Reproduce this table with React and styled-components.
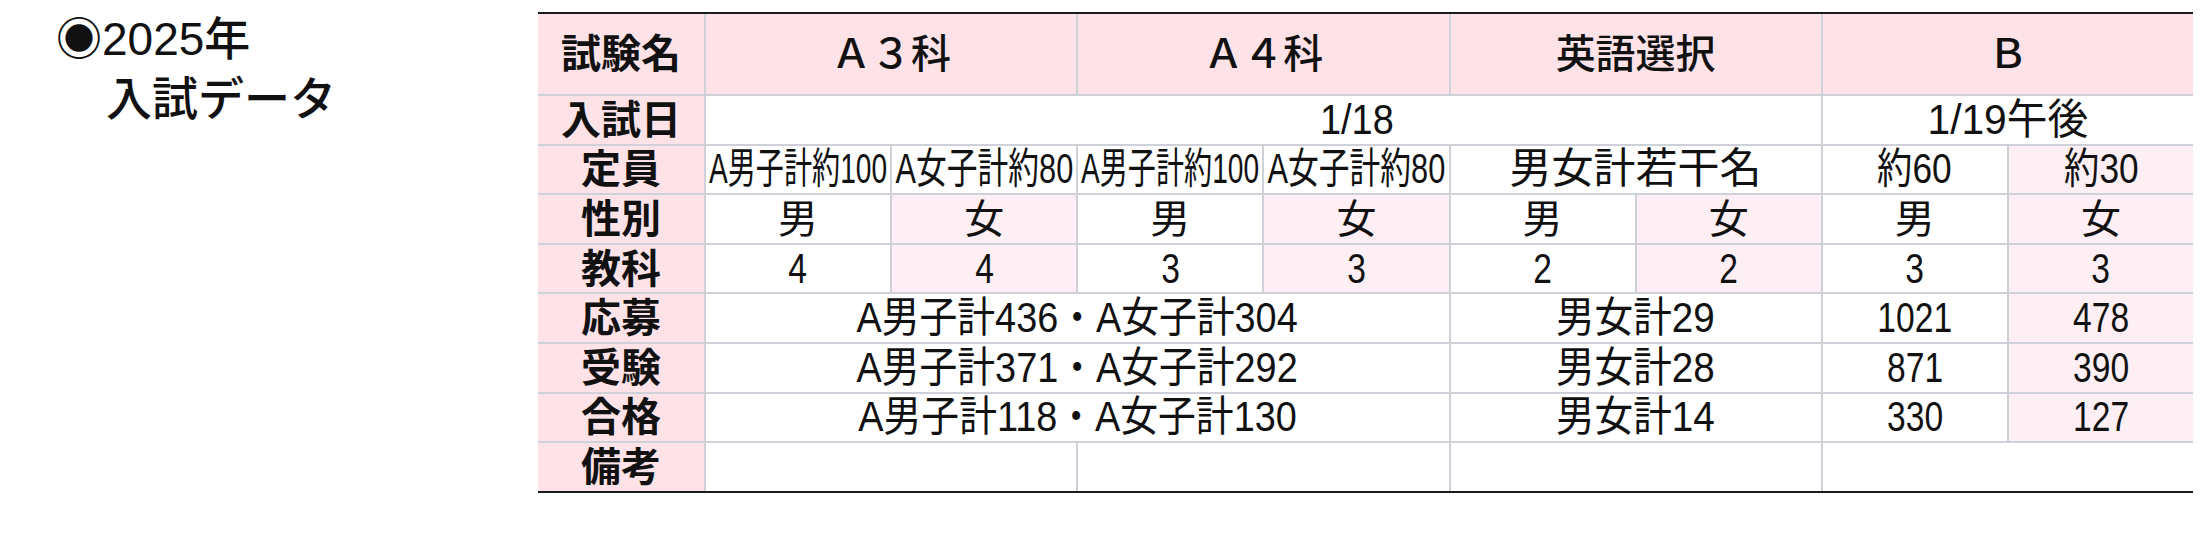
import React, { useLayoutEffect, useRef, useState } from "react"
import styled, { createGlobalStyle } from "styled-components"

const GlobalStyle = createGlobalStyle`
  body {
    margin: 0;
    background: #ffffff;
  }
`;

// shrinks a text horizontally when it is wider than its cell
function FitText({ children }) {
  const ref = useRef(null);
  const [fit, setFit] = useState({ scale: 1, pull: 0 });

  useLayoutEffect(() => {
    const el = ref.current;
    const avail = el.parentElement.clientWidth - 6;
    const w = el.offsetWidth;
    if (w > avail) setFit({ scale: avail / w, pull: (w - avail) / 2 });
  }, []);

  return (
    <Squeeze
      ref={ref}
      style={{ transform: `scaleX(${fit.scale})`, margin: `0 ${-fit.pull}px` }}
    >
      {children}
    </Squeeze>
  );
}

export default function App() {
  return (
    <Page>
      <GlobalStyle />
      <Title>
        <div>◉2025年</div>
        <Indent>入試データ</Indent>
      </Title>
      <Table>
        <Label>試験名</Label>
        <Head $span={2}>Ａ３科</Head>
        <Head $span={2}>Ａ４科</Head>
        <Head $span={2}>英語選択</Head>
        <Head $span={2}>Ｂ</Head>

        <Label>入試日</Label>
        <Cell $span={6} $shift={187}><Text $sx={0.9}>1/18</Text></Cell>
        <Cell $span={2}><Text $sx={0.97}>1/19午後</Text></Cell>

        <Label>定員</Label>
        <Cell><FitText>A男子計約100</FitText></Cell>
        <Cell><FitText>A女子計約80</FitText></Cell>
        <Cell><FitText>A男子計約100</FitText></Cell>
        <Cell><FitText>A女子計約80</FitText></Cell>
        <Cell $span={2}>男女計若干名</Cell>
        <Cell><Text $sx={0.84}>約60</Text></Cell>
        <Cell $tone="fem"><Text $sx={0.84}>約30</Text></Cell>

        <Label>性別</Label>
        <Cell $small>男</Cell>
        <Cell $small $tone="fem">女</Cell>
        <Cell $small>男</Cell>
        <Cell $small $tone="fem">女</Cell>
        <Cell $small>男</Cell>
        <Cell $small $tone="fem">女</Cell>
        <Cell $small>男</Cell>
        <Cell $small $tone="fem">女</Cell>

        <Label>教科</Label>
        <Cell><Text $sx={0.8}>4</Text></Cell>
        <Cell $tone="fem"><Text $sx={0.8}>4</Text></Cell>
        <Cell><Text $sx={0.8}>3</Text></Cell>
        <Cell $tone="fem"><Text $sx={0.8}>3</Text></Cell>
        <Cell><Text $sx={0.8}>2</Text></Cell>
        <Cell $tone="fem"><Text $sx={0.8}>2</Text></Cell>
        <Cell><Text $sx={0.8}>3</Text></Cell>
        <Cell $tone="fem"><Text $sx={0.8}>3</Text></Cell>

        <Label>応募</Label>
        <Cell $span={4}><Text $sx={0.9}>A男子計436・A女子計304</Text></Cell>
        <Cell $span={2}><Text $sx={0.92}>男女計29</Text></Cell>
        <Cell><Text $sx={0.8}>1021</Text></Cell>
        <Cell $tone="fem"><Text $sx={0.8}>478</Text></Cell>

        <Label>受験</Label>
        <Cell $span={4}><Text $sx={0.9}>A男子計371・A女子計292</Text></Cell>
        <Cell $span={2}><Text $sx={0.92}>男女計28</Text></Cell>
        <Cell><Text $sx={0.8}>871</Text></Cell>
        <Cell $tone="fem"><Text $sx={0.8}>390</Text></Cell>

        <Label>合格</Label>
        <Cell $span={4}><Text $sx={0.9}>A男子計118・A女子計130</Text></Cell>
        <Cell $span={2}><Text $sx={0.92}>男女計14</Text></Cell>
        <Cell><Text $sx={0.8}>330</Text></Cell>
        <Cell $tone="fem"><Text $sx={0.8}>127</Text></Cell>

        <Label>備考</Label>
        <Cell $span={2} />
        <Cell $span={2} />
        <Cell $span={2} />
        <Cell $span={2} />
      </Table>
    </Page>
  )
}

const tones = {
  head: "#fde3e8",
  fem: "#feeff4",
  plain: "#ffffff",
};

const Page = styled.div`
  display: flex;
  align-items: flex-start;
  width: 2210px;
  height: 560px;
  box-sizing: border-box;
  padding: 12px 0 0 56px;
  background: #ffffff;
  color: #111111;
`;

const Title = styled.div`
  width: 482px;
  flex: none;
  margin-top: -3px;
  font-family: "Liberation Sans", "Noto Sans CJK JP", sans-serif;
  font-size: 46px;
  font-weight: 500;
  line-height: 60px;
`;

const Indent = styled.div`
  padding-left: 50px;
`;

const Table = styled.div`
  display: grid;
  flex: none;
  grid-template-columns: 166px repeat(8, minmax(0, 1fr));
  grid-template-rows: 80px repeat(8, 47.6px);
  gap: 2px;
  width: 1655px;
  background: #cfd1d9;
  border-top: 2px solid #1a1a1a;
  border-bottom: 2px solid #1a1a1a;
`;

const Cell = styled.div`
  grid-column: span ${p => p.$span || 1};
  display: flex;
  align-items: center;
  justify-content: center;
  min-width: 0;
  box-sizing: border-box;
  padding-left: ${p => p.$shift || 0}px;
  background: ${p => tones[p.$tone || "plain"]};
  font-family: "Liberation Sans", "Noto Sans CJK JP", sans-serif;
  font-size: ${p => (p.$small ? 40 : 42)}px;
  line-height: 1;
  white-space: nowrap;
`;

const Head = styled(Cell)`
  background: ${tones.head};
  font-size: 40px;
  font-weight: 500;
`;

const Label = styled(Cell)`
  background: ${tones.head};
  font-size: 40px;
  font-weight: 700;
`;

const Text = styled.span`
  display: inline-block;
  transform: scaleX(${p => p.$sx || 1});
  transform-origin: center;
`;

const Squeeze = styled.span`
  display: inline-block;
  flex: none;
  transform-origin: center;
`;
